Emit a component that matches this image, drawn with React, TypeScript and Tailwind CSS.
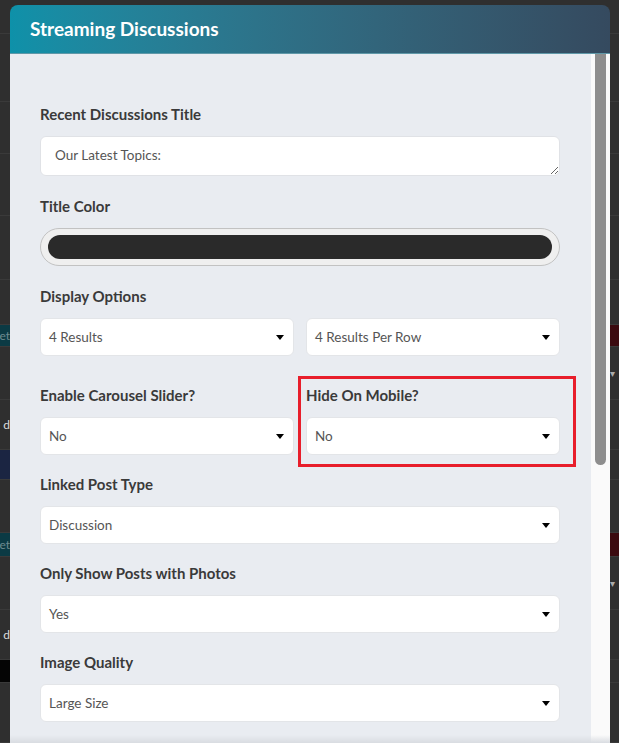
import React from 'react'

const font = { fontFamily: 'Lato, "Open Sans", sans-serif' }

type BgRow = {
  h: string
  left?: string
  right?: string
  leftText?: string
  caret?: boolean
}

// backdrop page strips peeking out on both sides of the modal
const bgRows: BgRow[] = [
  { h: 'h-[34px]' },
  { h: 'h-[68px]' },
  { h: 'h-[52px]' },
  { h: 'h-[62px]' },
  { h: 'h-[64px]' },
  { h: 'h-[45px]' },
  { h: 'h-[22px]', left: 'bg-[#0b3a44]', right: 'bg-[#3b0a0f]', leftText: 'Set' },
  { h: 'h-[53px]', caret: true },
  { h: 'h-[50px]', leftText: 'd' },
  { h: 'h-[30px]', left: 'bg-[#1b2542]' },
  { h: 'h-[53px]' },
  { h: 'h-[24px]', left: 'bg-[#0b3a44]', right: 'bg-[#3b0a0f]', leftText: 'Set' },
  { h: 'h-[53px]', caret: true },
  { h: 'h-[50px]', leftText: 'd' },
  { h: 'h-[23px]', left: 'bg-[#050505]' },
  { h: 'h-[60px]' },
]

function Caret() {
  return <span className="h-0 w-0 border-x-[4px] border-t-[5px] border-x-transparent border-t-black" />
}

function Select({ value }: { value: string }) {
  return (
    <div className="flex h-[38px] items-center justify-between rounded-[6px] border border-[#e3e5e8] bg-white pl-[8px] pr-[9px] text-[13.5px] text-[#555]">
      <span>{value}</span>
      <Caret />
    </div>
  )
}

function Label({ children }: { children: React.ReactNode }) {
  return <div className="mb-[12px] text-[15px] leading-[19px] font-bold text-[#3a3a3a]">{children}</div>
}

export default function App() {
  return (
    <div style={font} className="relative h-[743px] w-[619px] overflow-hidden bg-[#2f2f2f]">
      {bgRows.map((r, i) => (
        <div key={i} className={`flex justify-between border-b border-[#3a3a3a] ${r.h}`}>
          <div className={`flex w-[10px] items-center justify-end overflow-hidden text-[12px] ${r.left ?? ''}`}>
            {r.leftText && (
              <span className={r.leftText === 'd' ? 'text-[#ddd]' : 'text-[#6b8a90]'}>{r.leftText}</span>
            )}
          </div>
          <div className={`flex w-[9px] items-center justify-start text-[10px] text-[#aaa] ${r.right ?? ''}`}>
            {r.caret && '▾'}
          </div>
        </div>
      ))}

      <div className="absolute left-[10px] top-[5px] flex h-[745px] w-[600px] flex-col overflow-hidden rounded-t-[8px]">
        <div className="flex h-[49px] shrink-0 items-center border-b border-[#5f98a8] bg-linear-to-r from-[#0e91a9] to-[#354a5f] px-[20px] text-[19px] font-bold text-white">
          Streaming Discussions
        </div>

        <div className="flex flex-1">
          <div className="relative flex-1 bg-[#e9ecf1] pt-[51px] pr-[31px] pl-[30px]">
            <Label>Recent Discussions Title</Label>
            <textarea
              readOnly
              defaultValue="Our Latest Topics:"
              className="mb-[21px] block h-[40px] w-full rounded-[6px] border border-[#e0e2e6] bg-white px-[14px] pt-[8px] text-[13.5px] leading-[20px] text-[#555] outline-none"
            />

            <Label>Title Color</Label>
            <div className="mb-[21px] h-[38px] rounded-full border border-[#c2c2c2] bg-[#efefef] px-[7px] py-[6px]">
              <div className="h-full rounded-full bg-[#2a2a2a]" />
            </div>

            <Label>Display Options</Label>
            <div className="mb-[30px] grid grid-cols-2 gap-x-[12px]">
              <Select value="4 Results" />
              <Select value="4 Results Per Row" />
            </div>

            <div className="mb-[20px] grid grid-cols-2 gap-x-[12px]">
              <div>
                <Label>Enable Carousel Slider?</Label>
                <Select value="No" />
              </div>
              <div>
                <Label>Hide On Mobile?</Label>
                <Select value="No" />
              </div>
            </div>

            <Label>Linked Post Type</Label>
            <div className="mb-[20px]">
              <Select value="Discussion" />
            </div>

            <Label>Only Show Posts with Photos</Label>
            <div className="mb-[20px]">
              <Select value="Yes" />
            </div>

            <Label>Image Quality</Label>
            <Select value="Large Size" />

            {/* highlight annotation */}
            <div className="absolute left-[288px] top-[322px] h-[91px] w-[278px] border-[3px] border-[#e81e2b]" />
          </div>

          <div className="w-[19px] bg-[#fafafa] pl-[4px]">
            <div className="h-[411px] w-[11px] rounded-b-full bg-[#8e8e8e]" />
          </div>
        </div>
      </div>
      <div className="absolute bottom-0 left-[10px] h-[8px] w-[600px] bg-linear-to-b from-transparent to-[#d9dce1]" />
    </div>
  )
}
